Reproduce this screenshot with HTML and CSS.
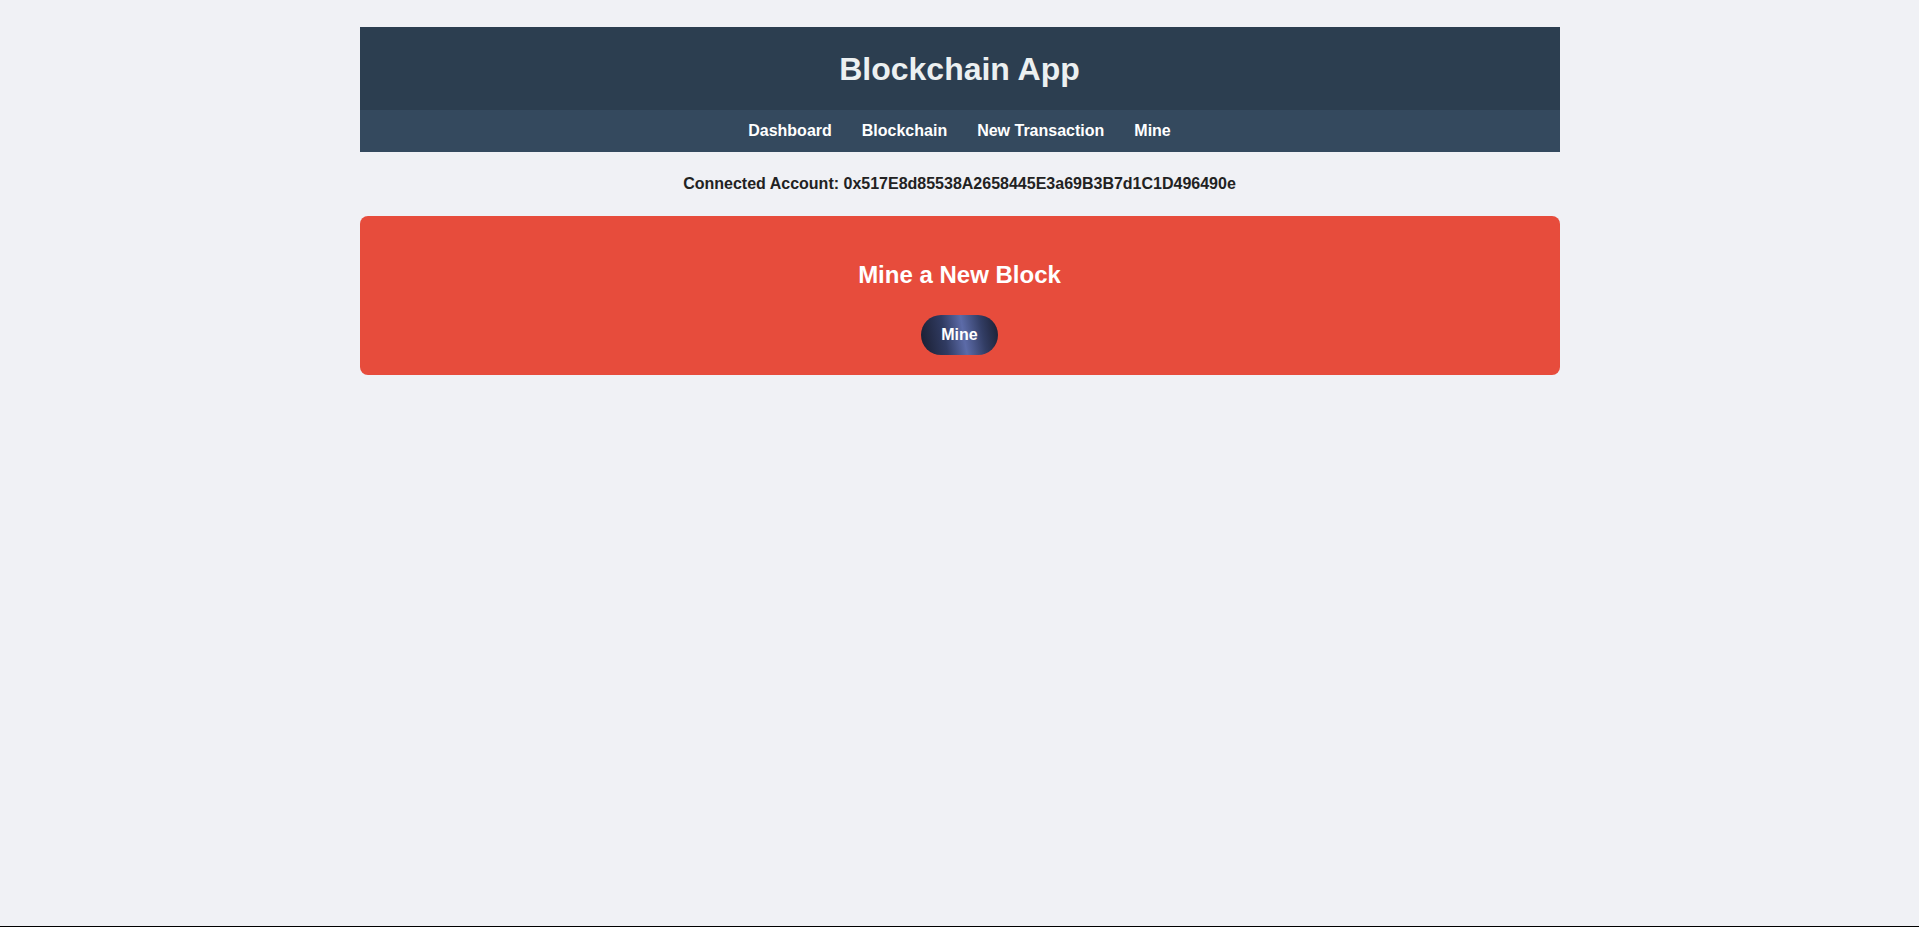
FILE: index.html
```html
<!DOCTYPE html>
<html lang="en">
<head>
<meta charset="utf-8">
<title>Blockchain App</title>
<link rel="stylesheet" href="styles.css">
</head>
<body>
  <div class="app">
    <header class="header">
      <h1 class="title">Blockchain App</h1>
      <nav class="nav">
        <a class="nav-link" href="#">Dashboard</a>
        <a class="nav-link" href="#">Blockchain</a>
        <a class="nav-link" href="#">New Transaction</a>
        <a class="nav-link" href="#">Mine</a>
      </nav>
    </header>
    <p class="account">Connected Account: 0x517E8d85538A2658445E3a69B3B7d1C1D496490e</p>
    <section class="mine-card">
      <h2 class="mine-title">Mine a New Block</h2>
      <button class="mine-btn" type="button">Mine</button>
    </section>
  </div>
</body>
</html>
```

FILE: styles.css
```css
html {
  background: #000;
  height: 100%;
}
body {
  margin: 0;
  height: calc(100% - 1px);
  background: #f0f1f5;
  font-family: "Liberation Sans", Arial, sans-serif;
}
.app {
  width: 1200px;
  margin: 0 auto;
  padding-top: 27px;
}
.header {
  background: #2c3e50;
  display: flex;
  flex-direction: column;
}
.title {
  margin: 0;
  height: 83px;
  display: flex;
  align-items: center;
  justify-content: center;
  color: #ecf0f1;
  font-size: 32px;
  font-weight: bold;
  padding-top: 2px;
  box-sizing: border-box;
}
.nav {
  background: #34495e;
  height: 42px;
  display: flex;
  align-items: center;
  justify-content: center;
  gap: 30px;
}
.nav-link {
  color: #fff;
  text-decoration: none;
  font-size: 16px;
  font-weight: bold;
}
.account {
  margin: 23px 0;
  text-align: center;
  font-size: 16px;
  font-weight: bold;
  color: #222;
}
.mine-card {
  background: #e74c3c;
  border-radius: 8px;
  padding: 45px 20px 20px;
  display: flex;
  flex-direction: column;
  align-items: center;
}
.mine-title {
  margin: 0 0 26px;
  color: #fff;
  font-size: 24px;
  font-weight: bold;
}
.mine-btn {
  border: none;
  border-radius: 20px;
  height: 40px;
  padding: 0 20px;
  color: #fff;
  font-family: inherit;
  font-size: 16px;
  font-weight: bold;
  background: linear-gradient(80deg, #1a1e30 0%, #303b62 32%, #5c6ba8 55%, #323d64 78%, #1a1e30 100%);
  cursor: pointer;
}
```
